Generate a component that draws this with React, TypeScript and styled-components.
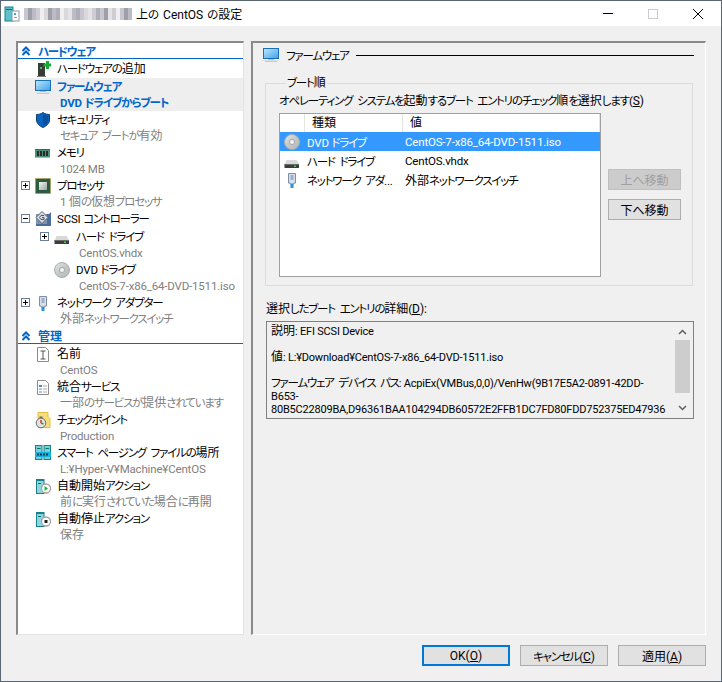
import React from "react";
import styled, { createGlobalStyle } from "styled-components";

const FONT = `Roboto, "Noto Sans CJK JP", sans-serif`;

const GlobalStyle = createGlobalStyle`
  html, body {
    margin: 0;
    padding: 0;
    background: #f0f0f0;
  }
  * {
    box-sizing: border-box;
  }
`;

const Window = styled.div`
  width: 722px;
  height: 682px;
  display: flex;
  flex-direction: column;
  background: #f0f0f0;
  border: 1px solid #5a6772;
  font-family: ${FONT};
  font-size: 12px;
  font-feature-settings: "palt";
  color: #000;
  overflow: hidden;
`;

// the dialog font has narrow kana and Latin, so runs get their own metrics
const KanaRun = styled.span`
  font-size: 11.5px;
  letter-spacing: -1.2px;
  word-spacing: 3px;
`;

const LatinRun = styled.span`
  font-size: 11.5px;
  letter-spacing: -0.18px;
`;

const RUN_SPLIT = /([\u3040-\u30ff]+(?: [\u3040-\u30ff]+)*|[\u0020-\u007e¥]+)/;

const T = ({ children }: { children: string }) => (
  <>
    {children.split(RUN_SPLIT).map((run, i) => {
      if (!run) return null;
      if (/^[\u3040-\u30ff]/.test(run)) return <KanaRun key={i}>{run}</KanaRun>;
      if (/^[\u0020-\u007e¥]/.test(run)) return <LatinRun key={i}>{run}</LatinRun>;
      return <span key={i}>{run}</span>;
    })}
  </>
);

const TitleBar = styled.div`
  height: 25px;
  flex: none;
  display: flex;
  align-items: center;
  background: #fff;
  padding-left: 3px;
`;

const maskColors = ["#c9c6d2", "#e6e3e6", "#aeb0b8", "#d8d8dd", "#bdbcc6", "#f0eeee", "#9ea0a8", "#d0ccd4"];
const maskStops = Array.from({ length: 27 }, (_, i) => {
  const c = maskColors[(i * 5 + (i % 3)) % maskColors.length];
  return `${c} ${i * 4}px ${(i + 1) * 4}px`;
}).join(", ");

const MaskedHost = styled.div`
  width: 108px;
  height: 12px;
  margin-left: 4px;
  background: linear-gradient(90deg, ${maskStops});
  filter: blur(0.6px);
`;

const TitleText = styled.div`
  margin-left: 4px;
  font-size: 12px;
  ${LatinRun} {
    font-size: 12px;
    letter-spacing: 0;
    word-spacing: 1px;
  }
  ${KanaRun} {
    letter-spacing: 0;
  }
`;

const WindowControls = styled.div`
  margin-left: auto;
  display: flex;
  align-items: center;
  gap: 35px;
  padding-right: 18px;
`;

const Main = styled.div`
  flex: 1;
  display: flex;
  padding: 15px 16px 0 15px;
  gap: 7px;
  min-height: 0;
`;

const TreePanel = styled.div`
  width: 228px;
  height: 594px;
  flex: none;
  background: #fff;
  border-top: 2px solid #8a8a8a;
  border-left: 2px solid #8a8a8a;
  border-right: 1px solid #e3e3e3;
  border-bottom: 1px solid #e3e3e3;
`;

const SectionHeader = styled.div<{ $later?: boolean }>`
  height: 16px;
  display: flex;
  align-items: center;
  padding-left: 3px;
  gap: 7px;
  color: #0066cc;
  font-weight: 700;
  font-size: 12px;
  border-bottom: 1px solid #0066cc;
  margin-top: ${(p) => (p.$later ? 1 : 0)}px;
  margin-bottom: 1px;
`;

const TreeRow = styled.div<{ $depth?: number; $active?: boolean; $single?: boolean }>`
  display: flex;
  height: ${(p) => (p.$single ? 18 : 33)}px;
  padding-left: ${(p) => (p.$depth ? 22 : 3)}px;
  background: ${(p) => (p.$active ? "#eeeeee" : "transparent")};
`;

const ExpanderSlot = styled.div`
  width: 9px;
  flex: none;
  margin-top: 4px;
  margin-right: 5px;
`;

const Expander = styled.div`
  width: 9px;
  height: 9px;
  border: 1px solid #6b7f99;
  position: relative;
  &::before {
    content: "";
    position: absolute;
    left: 1px;
    top: 3px;
    width: 5px;
    height: 1px;
    background: #000;
  }
`;

const ExpanderPlus = styled(Expander)`
  &::after {
    content: "";
    position: absolute;
    left: 3px;
    top: 1px;
    width: 1px;
    height: 5px;
    background: #000;
  }
`;

const IconSlot = styled.div`
  width: 16px;
  height: 16px;
  flex: none;
  margin-right: 6px;
  margin-top: 1px;
`;

const RowText = styled.div`
  display: flex;
  flex-direction: column;
  min-width: 0;
`;

const RowLabel = styled.div<{ $active?: boolean }>`
  height: 17px;
  line-height: 19px;
  white-space: nowrap;
  color: ${(p) => (p.$active ? "#0066cc" : "#000")};
  font-weight: ${(p) => (p.$active ? 700 : 400)};
`;

const RowSub = styled.div<{ $active?: boolean }>`
  height: 16px;
  line-height: 16px;
  margin-left: 3px;
  white-space: nowrap;
  color: ${(p) => (p.$active ? "#0066cc" : "#808080")};
  font-weight: ${(p) => (p.$active ? 700 : 400)};
`;

const ContentPanel = styled.div`
  width: 455px;
  height: 594px;
  flex: none;
  border-top: 2px solid #8a8a8a;
  border-left: 2px solid #8a8a8a;
  border-right: 1px solid #fff;
  border-bottom: 1px solid #fff;
  padding: 4px 11px 0 10px;
`;

const PanelHeading = styled.div`
  height: 16px;
  display: flex;
  align-items: center;
  gap: 7px;
`;

const HeadingRule = styled.div`
  flex: 1;
  height: 1px;
  background: #000;
`;

const BootGroup = styled.fieldset`
  margin: 12px 0 0 2px;
  padding: 2px 0 0 13px;
  width: 428px;
  height: 211px;
  border: 1px solid #dcdcdc;
  min-inline-size: 0;
`;

const BootLegend = styled.legend`
  padding: 0 1px;
  margin-left: 7px;
  line-height: 16px;
`;

const BootHint = styled.div`
  line-height: 16px;
  white-space: nowrap;
`;

const BootBody = styled.div`
  display: flex;
  margin-top: 4px;
  gap: 7px;
`;

const BootList = styled.div`
  width: 322px;
  height: 164px;
  background: #fff;
  border: 1px solid #a0a0a0;
  flex: none;
`;

const ListHeader = styled.div`
  display: flex;
  height: 18px;
`;

const HeaderCell = styled.div<{ $w: number }>`
  width: ${(p) => p.$w}px;
  line-height: 18px;
  padding-left: 7px;
  border-right: 1px solid #e5e5e5;
  flex: none;
`;

const ListRow = styled.div<{ $selected?: boolean }>`
  display: flex;
  align-items: center;
  height: 19px;
  background: ${(p) => (p.$selected ? "#3399ff" : "transparent")};
  color: ${(p) => (p.$selected ? "#fff" : "#000")};
  white-space: nowrap;
`;

const ListIcon = styled.div`
  width: 16px;
  height: 16px;
  margin: 0 7px 0 4px;
  flex: none;
`;

const ListName = styled.div`
  width: 98px;
  flex: none;
  white-space: nowrap;
  overflow: hidden;
`;

const MoveButtons = styled.div`
  display: flex;
  flex-direction: column;
  gap: 9px;
  padding-top: 56px;
`;

const MoveButton = styled.button<{ $disabled?: boolean }>`
  width: 73px;
  height: 21px;
  padding: 0;
  font: inherit;
  font-feature-settings: normal;
  background: ${(p) => (p.$disabled ? "#cccccc" : "#e1e1e1")};
  color: ${(p) => (p.$disabled ? "#a0a0a0" : "#000")};
  border: 1px solid ${(p) => (p.$disabled ? "#bfbfbf" : "#adadad")};
`;

const DetailLabel = styled.div`
  margin: 15px 0 0 3px;
  line-height: 16px;
`;

const DetailBox = styled.div`
  width: 428px;
  height: 98px;
  margin: 4px 0 0 3px;
  border: 1px solid #808080;
  display: flex;
  padding: 2px 3px 0 4px;
  background: #f0f0f0;
`;

const DetailText = styled.div`
  flex: 1;
  min-width: 0;
  overflow: hidden;
  padding-top: 1px;
`;

const DetailLine = styled.div`
  height: 13px;
  line-height: 13px;
  white-space: nowrap;
  ${LatinRun} {
    font-size: 11px;
    letter-spacing: -0.2px;
  }
`;

const DetailScrollbar = styled.div`
  width: 15px;
  flex: none;
  margin-bottom: 2px;
  display: flex;
  flex-direction: column;
  align-items: center;
`;

const ScrollArrow = styled.div`
  height: 16px;
  flex: none;
  display: flex;
  align-items: center;
`;

const ScrollThumb = styled.div`
  width: 15px;
  height: 53px;
  flex: none;
  background: #cdcdcd;
  margin-bottom: auto;
`;

const Footer = styled.div`
  flex: none;
  display: flex;
  justify-content: flex-end;
  gap: 10px;
  padding: 10px 15px 0 0;
  height: 46px;
`;

const DialogButton = styled.button<{ $primary?: boolean }>`
  width: 88px;
  height: 21px;
  padding: 0;
  font: inherit;
  color: #000;
  background: #e1e1e1;
  border: ${(p) => (p.$primary ? "2px solid #0078d7" : "1px solid #adadad")};
`;

/* ---- icons ---- */

const AppIcon = () => (
  <svg width="16" height="16" viewBox="0 0 16 16">
    <rect x="1" y="1" width="8" height="14" fill="#5fc1c9" stroke="#17828c" />
    <rect x="2" y="3" width="6" height="1" fill="#0d6f78" />
    <rect x="8" y="5" width="7" height="10" fill="#fff" stroke="#8a9aa8" />
    <rect x="10" y="7" width="2" height="2" fill="#4aa0d8" />
    <rect x="10" y="11" width="3" height="1" fill="#8a9aa8" />
  </svg>
);

const AddHardwareIcon = () => (
  <svg width="16" height="17" viewBox="0 0 16 17">
    <path d="M3 2h7v13H3z" fill="#3a3a3a" />
    <path d="M2 15h9v1H2z" fill="#7c7c7c" />
    <rect x="5" y="6" width="2" height="2" fill="#39c449" />
    <path d="M11 0h3v2.500h2v3h-2V8h-3V5.500H8.500v-3H11z" fill="#18a835" />
  </svg>
);

const MonitorIcon = () => (
  <svg width="16" height="16" viewBox="0 0 16 16">
    <defs>
      <linearGradient id="screen" x1="0" y1="0" x2="1" y2="1">
        <stop offset="0" stopColor="#bfe6fb" />
        <stop offset="1" stopColor="#3ea3ea" />
      </linearGradient>
    </defs>
    <rect x="0.500" y="1.500" width="15" height="10" fill="url(#screen)" stroke="#1b6fb5" />
    <rect x="0" y="13" width="16" height="1" fill="#dfe3e6" />
    <rect x="5" y="12" width="6" height="1" fill="#b9bfc4" />
    <rect x="2" y="14" width="12" height="1" fill="#c7cbcf" />
  </svg>
);

const ShieldIcon = () => (
  <svg width="16" height="16" viewBox="0 0 16 16">
    <path d="M8 0.500C6 2 3.500 2.500 1.500 2.500V8c0 3.500 3 6 6.500 7.500C11.500 14 14.500 11.500 14.500 8V2.500C12.500 2.500 10 2 8 0.500z" fill="#0a63bd" stroke="#0b3f78" />
    <path d="M8 2v12c2.800-1.300 5-3.400 5-6V3.600C11 3.500 9.400 3 8 2z" fill="#0750a0" />
  </svg>
);

const MemoryIcon = () => (
  <svg width="16" height="16" viewBox="0 0 16 16">
    <rect x="0" y="4" width="15" height="9" fill="#4a9078" />
    <rect x="0" y="4" width="15" height="1" fill="#2f6d5a" />
    <rect x="2" y="6" width="2" height="5" fill="#2b2b2b" />
    <rect x="5" y="6" width="2" height="5" fill="#2b2b2b" />
    <rect x="8" y="6" width="2" height="5" fill="#2b2b2b" />
    <rect x="11" y="6" width="2" height="5" fill="#2b2b2b" />
    <rect x="0" y="12" width="15" height="1" fill="#c9b95a" />
  </svg>
);

const CpuIcon = () => (
  <svg width="16" height="16" viewBox="0 0 16 16">
    <defs>
      <linearGradient id="die" x1="0" y1="0" x2="1" y2="1">
        <stop offset="0" stopColor="#f4f6f4" />
        <stop offset="1" stopColor="#9aa59c" />
      </linearGradient>
    </defs>
    <rect x="0.500" y="0.500" width="15" height="15" fill="#2f5a3e" stroke="#b79a3a" strokeDasharray="1 1" />
    <rect x="2" y="2" width="12" height="12" fill="#2d5b41" />
    <rect x="4" y="4" width="8" height="8" fill="url(#die)" />
  </svg>
);

const ScsiIcon = () => (
  <svg width="16" height="16" viewBox="0 0 16 16">
    <path d="M1 3h13l2 -2v14H1z" fill="#4c6d99" />
    <rect x="1" y="3" width="11" height="10" fill="#7d93b3" />
    <path d="M7 0.500L13 6.500 7 12.500 1 6.500z" fill="#d8dde3" stroke="#56606c" />
    <path d="M9 4.500H6L4.500 6.500 6 8.500H9V6.500H7" fill="none" stroke="#4a5563" />
  </svg>
);

const HddIcon = () => (
  <svg width="16" height="16" viewBox="0 0 16 16">
    <path d="M1 11L2.500 7h10L15 11z" fill="#d9d9d9" />
    <rect x="0.500" y="11" width="14.500" height="4" rx="0.500" fill="#3d3d3d" />
    <rect x="0.500" y="11" width="14.500" height="1" fill="#6b6b6b" />
    <rect x="10" y="12.500" width="2" height="1.500" fill="#38d24c" />
  </svg>
);

const DvdIcon = () => (
  <svg width="16" height="16" viewBox="0 0 16 16">
    <defs>
      <linearGradient id="disc" x1="0" y1="0" x2="1" y2="1">
        <stop offset="0" stopColor="#e8e8e8" />
        <stop offset="0.500" stopColor="#c4c8c6" />
        <stop offset="1" stopColor="#b4b8b6" />
      </linearGradient>
    </defs>
    <circle cx="8" cy="8" r="7.500" fill="url(#disc)" stroke="#a9acab" strokeWidth="1" />
    <circle cx="8" cy="8" r="2.700" fill="#dfe3ea" stroke="#9ea3ab" strokeWidth="0.800" />
    <circle cx="8" cy="8" r="1" fill="#fff" />
  </svg>
);

const NetworkIcon = () => (
  <svg width="16" height="16" viewBox="0 0 16 16">
    <path d="M4.500 1.500h7V11H10v1H6v-1H4.500z" fill="#d6deea" stroke="#7d8ea6" />
    <rect x="6.500" y="3" width="3" height="5" fill="#9cb0c8" />
    <rect x="6.500" y="12" width="3" height="4" fill="#2d8fd5" />
  </svg>
);

const NameIcon = () => (
  <svg width="16" height="17" viewBox="0 0 16 17">
    <path d="M2.500 1.500h8l3 3v11h-11z" fill="#fff" stroke="#8c8c8c" />
    <path d="M5.500 5h5M5.500 13h5M8 5v8" fill="none" stroke="#555" />
  </svg>
);

const ServicesIcon = () => (
  <svg width="16" height="17" viewBox="0 0 16 17">
    <path d="M2.500 1.500h8l3 3v11h-11z" fill="#fff" stroke="#8c8c8c" />
    <rect x="4" y="6" width="3" height="2" fill="#3a8fd8" />
    <rect x="8" y="6.500" width="4" height="1" fill="#aaa" />
    <rect x="4" y="9" width="3" height="2" fill="#b9c6d4" />
    <rect x="8" y="9.500" width="4" height="1" fill="#aaa" />
    <rect x="4" y="12" width="3" height="2" fill="#b9c6d4" />
    <rect x="8" y="12.500" width="4" height="1" fill="#aaa" />
  </svg>
);

const CheckpointIcon = () => (
  <svg width="16" height="17" viewBox="0 0 16 17">
    <path d="M3 0.500h10v4l2 2v9H3z" fill="#f7dd79" stroke="#e3bd44" />
    <circle cx="6" cy="11" r="4.800" fill="#e2e4e4" stroke="#6d6d6d" />
    <rect x="4.500" y="4.500" width="3" height="1.500" fill="#6d6d6d" />
    <path d="M6 8v3" stroke="#c23b2e" strokeWidth="1.500" />
    <path d="M6 11l2.500 1" stroke="#2f9e44" strokeWidth="1.500" />
  </svg>
);

const PagingIcon = () => (
  <svg width="16" height="16" viewBox="0 0 16 16">
    <rect x="0.500" y="0.500" width="6.500" height="14" fill="#7bd0d8" stroke="#17828c" />
    <rect x="9" y="0.500" width="6.500" height="14" fill="#7bd0d8" stroke="#17828c" />
    <rect x="2" y="3" width="3.500" height="1" fill="#0d6f78" />
    <rect x="10.500" y="3" width="3.500" height="1" fill="#0d6f78" />
    <rect x="0" y="7" width="16" height="5" fill="#14b3dc" />
    <rect x="2" y="8.500" width="2" height="2" fill="#063a54" />
    <rect x="5" y="8.500" width="2" height="2" fill="#063a54" />
    <rect x="8" y="8.500" width="2" height="2" fill="#063a54" />
    <rect x="11" y="8.500" width="2" height="2" fill="#063a54" />
  </svg>
);

const ActionIcon = ({ stop }: { stop?: boolean }) => (
  <svg width="16" height="16" viewBox="0 0 16 16">
    <rect x="1.500" y="1.500" width="7.500" height="14" fill="#8fd6dc" stroke="#17828c" />
    <rect x="2" y="1" width="7" height="2" fill="#17828c" />
    <rect x="3" y="5" width="3" height="1" fill="#0d6f78" />
    <circle cx="11" cy="10.500" r="4.500" fill="#fff" stroke="#a3a3a3" strokeWidth="1.300" />
    {stop ? (
      <rect x="9.500" y="9" width="3" height="3" fill="#222" />
    ) : (
      <path d="M9.500 8l3.500 2.500-3.500 2.500z" fill="#22b33a" />
    )}
  </svg>
);

const Chevrons = () => (
  <svg width="10" height="10" viewBox="0 0 10 10" style={{ flex: "none" }}>
    <path d="M1.500 5L5 1.500 8.500 5M1.500 9L5 5.500 8.500 9" fill="none" stroke="#0066cc" strokeWidth="2" />
  </svg>
);

/* ---- data ---- */

type TreeItem = {
  label: string;
  sub?: string;
  icon: React.ReactNode;
  depth?: number;
  expander?: "plus" | "minus";
  active?: boolean;
};

const hardware: TreeItem[] = [
  { label: "ハードウェアの追加", icon: <AddHardwareIcon /> },
  { label: "ファームウェア", sub: "DVD ドライブからブート", icon: <MonitorIcon />, active: true },
  { label: "セキュリティ", sub: "セキュア ブートが有効", icon: <ShieldIcon /> },
  { label: "メモリ", sub: "1024 MB", icon: <MemoryIcon /> },
  { label: "プロセッサ", sub: "1 個の仮想プロセッサ", icon: <CpuIcon />, expander: "plus" },
  { label: "SCSI コントローラー", icon: <ScsiIcon />, expander: "minus" },
  { label: "ハード ドライブ", sub: "CentOS.vhdx", icon: <HddIcon />, depth: 1, expander: "plus" },
  { label: "DVD ドライブ", sub: "CentOS-7-x86_64-DVD-1511.iso", icon: <DvdIcon />, depth: 1 },
  { label: "ネットワーク アダプター", sub: "外部ネットワークスイッチ", icon: <NetworkIcon />, expander: "plus" },
];

const management: TreeItem[] = [
  { label: "名前", sub: "CentOS", icon: <NameIcon /> },
  { label: "統合サービス", sub: "一部のサービスが提供されています", icon: <ServicesIcon /> },
  { label: "チェックポイント", sub: "Production", icon: <CheckpointIcon /> },
  { label: "スマート ページング ファイルの場所", sub: "L:¥Hyper-V¥Machine¥CentOS", icon: <PagingIcon /> },
  { label: "自動開始アクション", sub: "前に実行されていた場合に再開", icon: <ActionIcon /> },
  { label: "自動停止アクション", sub: "保存", icon: <ActionIcon stop /> },
];

const bootEntries = [
  { name: "DVD ドライブ", value: "CentOS-7-x86_64-DVD-1511.iso", icon: <DvdIcon />, selected: true },
  { name: "ハード ドライブ", value: "CentOS.vhdx", icon: <HddIcon /> },
  { name: "ネットワーク アダ...", value: "外部ネットワークスイッチ", icon: <NetworkIcon /> },
];

const detailLines = [
  "説明: EFI SCSI Device",
  "",
  "値: L:¥Download¥CentOS-7-x86_64-DVD-1511.iso",
  "",
  "ファームウェア デバイス パス: AcpiEx(VMBus,0,0)/VenHw(9B17E5A2-0891-42DD-",
  "B653-",
  "80B5C22809BA,D96361BAA104294DB60572E2FFB1DC7FD80FDD752375ED47936",
];

const renderTreeRow = (item: TreeItem) => (
  <TreeRow key={item.label} $depth={item.depth} $active={item.active} $single={!item.sub}>
    <ExpanderSlot>
      {item.expander === "plus" && <ExpanderPlus />}
      {item.expander === "minus" && <Expander />}
    </ExpanderSlot>
    <IconSlot>{item.icon}</IconSlot>
    <RowText>
      <RowLabel $active={item.active}>
        <T>{item.label}</T>
      </RowLabel>
      {item.sub && (
        <RowSub $active={item.active}>
          <T>{item.sub}</T>
        </RowSub>
      )}
    </RowText>
  </TreeRow>
);

export default function App() {
  return (
    <Window>
      <GlobalStyle />
      <TitleBar>
        <AppIcon />
        <MaskedHost />
        <TitleText>
          <T>上の CentOS の設定</T>
        </TitleText>
        <WindowControls>
          <svg width="10" height="10" viewBox="0 0 10 10">
            <path d="M0 4.500h10" stroke="#000" />
          </svg>
          <svg width="10" height="10" viewBox="0 0 10 10">
            <rect x="0.500" y="0.500" width="9" height="9" fill="none" stroke="#ccc" />
          </svg>
          <svg width="10" height="10" viewBox="0 0 10 10">
            <path d="M0 0l10 10M10 0L0 10" stroke="#000" />
          </svg>
        </WindowControls>
      </TitleBar>
      <Main>
        <TreePanel>
          <SectionHeader>
            <Chevrons />
            <span>
              <T>ハードウェア</T>
            </span>
          </SectionHeader>
          {hardware.map(renderTreeRow)}
          <SectionHeader $later>
            <Chevrons />
            管理
          </SectionHeader>
          {management.map(renderTreeRow)}
        </TreePanel>
        <ContentPanel>
          <PanelHeading>
            <MonitorIcon />
            <span>
              <T>ファームウェア</T>
            </span>
            <HeadingRule />
          </PanelHeading>
          <BootGroup>
            <BootLegend>
              <T>ブート順</T>
            </BootLegend>
            <BootHint>
              <T>オペレーティング システムを起動するブート エントリのチェック順を選択します(</T>
              <u>S</u>)
            </BootHint>
            <BootBody>
              <BootList>
                <ListHeader>
                  <HeaderCell $w={25} />
                  <HeaderCell $w={98}>種類</HeaderCell>
                  <HeaderCell $w={197}>値</HeaderCell>
                </ListHeader>
                {bootEntries.map((entry) => (
                  <ListRow key={entry.name} $selected={entry.selected}>
                    <ListIcon>{entry.icon}</ListIcon>
                    <ListName>
                      <T>{entry.name}</T>
                    </ListName>
                    <span>
                      <T>{entry.value}</T>
                    </span>
                  </ListRow>
                ))}
              </BootList>
              <MoveButtons>
                <MoveButton $disabled>上へ移動</MoveButton>
                <MoveButton>下へ移動</MoveButton>
              </MoveButtons>
            </BootBody>
          </BootGroup>
          <DetailLabel>
            <T>選択したブート エントリの詳細(</T>
            <u>D</u>):
          </DetailLabel>
          <DetailBox>
            <DetailText>
              {detailLines.map((line, i) => (
                <DetailLine key={i}>
                  <T>{line}</T>
                </DetailLine>
              ))}
            </DetailText>
            <DetailScrollbar>
              <ScrollArrow>
                <svg width="9" height="6" viewBox="0 0 9 6">
                  <path d="M1 5l3.500-3.500L8 5" fill="none" stroke="#606060" strokeWidth="1.500" />
                </svg>
              </ScrollArrow>
              <ScrollThumb />
              <ScrollArrow>
                <svg width="9" height="6" viewBox="0 0 9 6">
                  <path d="M1 1l3.500 3.500L8 1" fill="none" stroke="#606060" strokeWidth="1.500" />
                </svg>
              </ScrollArrow>
            </DetailScrollbar>
          </DetailBox>
        </ContentPanel>
      </Main>
      <Footer>
        <DialogButton $primary>
          OK(<u>O</u>)
        </DialogButton>
        <DialogButton>
          <T>キャンセル(</T>
          <u>C</u>)
        </DialogButton>
        <DialogButton>
          適用(<u>A</u>)
        </DialogButton>
      </Footer>
    </Window>
  );
}
